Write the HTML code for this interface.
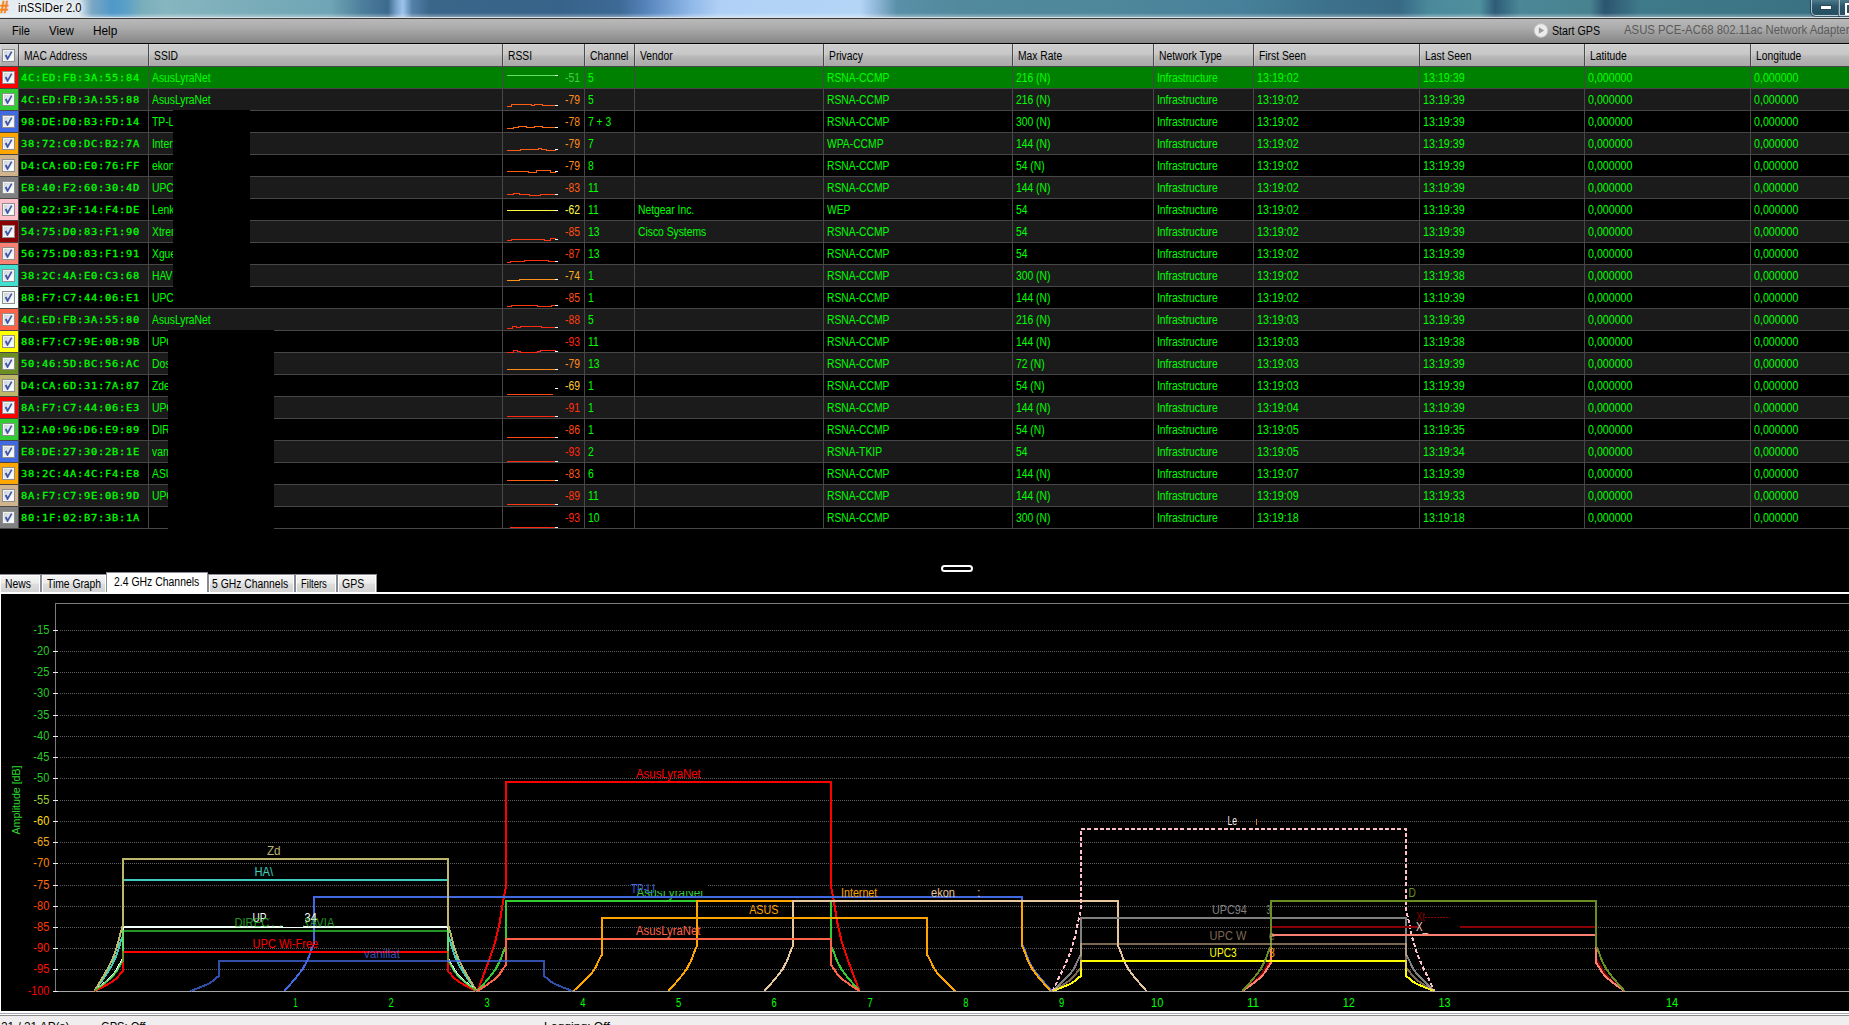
<!DOCTYPE html>
<html lang="en"><head><meta charset="utf-8"><title>inSSIDer 2.0</title>
<style>
html,body{margin:0;padding:0;background:#000}
body{width:1849px;height:1025px;position:relative;overflow:hidden;font-family:"Liberation Sans",sans-serif}
.a{position:absolute}
.t{position:absolute;white-space:pre;font-size:12.5px;line-height:21px;height:21px;transform:scaleX(.825);transform-origin:0 0;color:#0f0}
.h{color:#000}
.m{position:absolute;white-space:pre;-webkit-text-stroke:.26px #0f0;font:normal 9.3px/21px "DejaVu Sans Mono","Liberation Mono",monospace;letter-spacing:.65px;color:#0f0;height:21px;transform:scaleX(1.12);transform-origin:0 0}
.r{position:absolute;left:0;width:1849px;height:21px}
.r.o{background:#1b1b1b}
.r.s{background:#008000}
.vl{position:absolute;width:1px;background:#474747;top:66px;height:463px}
.hl{position:absolute;left:0;width:1849px;height:1px;background:#474747}
.sw{position:absolute;left:0;width:18px;height:21px}
.cb{position:absolute;left:2px;width:11px;height:11px;border:1px solid #8e8f8f;background:linear-gradient(135deg,#c6ccd5 0%,#e4e8ec 45%,#fff 85%);box-shadow:inset 0 0 0 1px #f4f4f4}
.cb svg{position:absolute;left:0;top:0}
.g{font-family:"Liberation Sans",sans-serif;font-size:12px;white-space:pre;position:absolute;transform-origin:0 0}
.tab{position:absolute;top:574px;height:17px;border:1px solid #898c95;border-bottom:none;background:linear-gradient(#f4f4f4 0%,#ececec 48%,#dedede 52%,#d2d2d2 100%);box-shadow:inset 1px 1px 0 rgba(255,255,255,.9),inset -1px 0 0 rgba(255,255,255,.9)}
.hc{position:absolute;top:44px;height:22px;background:linear-gradient(#cecece 0%,#c8c8c8 45%,#b6b6b6 60%,#a9a9a9 100%);box-shadow:inset 1px 1px 0 rgba(255,255,255,.16)}
</style></head>
<body>
<div class="a" style="left:0;top:0;width:1849px;height:17px;background:linear-gradient(90deg,#e6eef2 0px,#d9e5eb 78px,#7aa8c4 92px,#4f98c8 112px,#5aa0c8 126px,#7aaebb 142px,#86b6c0 165px,#7aadb9 250px,#6fa5b5 330px,#4d7f9c 362px,#3c6a8e 388px,#7fa8d0 397px,#9cc4ec 403px,#5580a8 412px,#3a668a 430px,#37638a 560px,#3d6a96 620px,#5a88c0 650px,#8fb8e8 690px,#b0d0f5 720px,#b5d5f7 860px,#86b0cf 880px,#5a90a8 897px,#52899c 960px,#4f889b 1100px,#47809a 1240px,#3d718b 1330px,#386a86 1400px,#4b8a9b 1430px,#4f8f9e 1480px,#2f5c78 1495px,#4a8797 1520px,#48828f 1590px,#2c5570 1605px,#3f7a8a 1640px,#3d7686 1740px,#386e80 1849px)"></div>
<div class="a" style="left:0;top:13px;width:1849px;height:4px;background:linear-gradient(rgba(255,255,255,0),rgba(255,255,255,.35))"></div>
<div class="a" style="left:0px;top:-1px;font:bold 16px/18px 'Liberation Sans',sans-serif;color:#f58220;-webkit-text-stroke:.7px #f58220;transform:scaleX(.95);transform-origin:0 0">#</div>
<div class="g" style="left:18px;top:0;line-height:16px;color:#000;transform:scaleX(.935);text-shadow:0 0 6px #fff,0 0 6px #fff,0 0 9px #fff">inSSIDer 2.0</div>
<div class="a" style="left:1811px;top:-4px;width:26px;height:18px;border:1px solid rgba(225,238,245,.7);border-radius:0 0 0 5px;background:linear-gradient(rgba(120,160,178,.55),rgba(35,72,92,.6) 50%,rgba(28,62,82,.7));box-shadow:0 0 0 1px rgba(20,40,60,.55)"></div>
<div class="a" style="left:1821px;top:6px;width:10px;height:3px;background:#fff;box-shadow:0 0 0 1px rgba(40,60,75,.55)"></div>
<div class="a" style="left:1839px;top:-4px;width:27px;height:18px;border:1px solid rgba(225,238,245,.7);background:linear-gradient(rgba(120,160,178,.55),rgba(35,72,92,.6) 50%,rgba(28,62,82,.7));box-shadow:0 0 0 1px rgba(20,40,60,.55)"></div>
<div class="a" style="left:1845px;top:3px;width:6px;height:8px;border:2px solid #fff"></div>
<div class="a" style="left:0;top:17px;width:1849px;height:1px;background:#d9e3e8"></div>
<div class="a" style="left:0;top:18px;width:1849px;height:1px;background:#3a3a3a"></div>
<div class="a" style="left:0;top:19px;width:1849px;height:24px;background:linear-gradient(#b9b9b9 0%,#acacac 35%,#989898 70%,#868686 100%)"></div>
<div class="g" style="left:12px;top:23px;line-height:16px;color:#000;transform:scaleX(0.92)">File</div>
<div class="g" style="left:49px;top:23px;line-height:16px;color:#000;transform:scaleX(0.96)">View</div>
<div class="g" style="left:93px;top:23px;line-height:16px;color:#000;transform:scaleX(0.985)">Help</div>
<svg class="a" style="left:1533px;top:23px" width="16" height="16" viewBox="0 0 16 16"><circle cx="8" cy="7.5" r="6.8" fill="#ececec" stroke="#c4c4c4" stroke-width="1"/><path d="M5.8 4.2 L11.2 7.5 L5.8 10.8 Z" fill="#9a9a9a"/></svg>
<div class="g" style="left:1552px;top:23px;line-height:16px;color:#000;transform:scaleX(.89)">Start GPS</div>
<div class="g" style="left:1624px;top:22px;line-height:16px;color:#5a5a5a;transform:scaleX(.945)">ASUS PCE-AC68 802.11ac Network Adapter</div>
<div class="a" style="left:0;top:43px;width:1849px;height:1px;background:#000"></div>
<div class="a" style="left:0;top:44px;width:1849px;height:22px;background:#a8a8a8"></div>
<div class="hc" style="left:0px;width:18px"></div>
<div class="hc" style="left:19px;width:129px"></div>
<div class="a" style="left:18px;top:44px;width:1px;height:22px;background:#4a4a4a"></div>
<div class="t h" style="left:23.5px;top:46px">MAC Address</div>
<div class="hc" style="left:149px;width:353px"></div>
<div class="a" style="left:148px;top:44px;width:1px;height:22px;background:#4a4a4a"></div>
<div class="t h" style="left:153.5px;top:46px">SSID</div>
<div class="hc" style="left:503px;width:81px"></div>
<div class="a" style="left:502px;top:44px;width:1px;height:22px;background:#4a4a4a"></div>
<div class="t h" style="left:507.5px;top:46px">RSSI</div>
<div class="hc" style="left:585px;width:49px"></div>
<div class="a" style="left:584px;top:44px;width:1px;height:22px;background:#4a4a4a"></div>
<div class="t h" style="left:589.5px;top:46px">Channel</div>
<div class="hc" style="left:635px;width:188px"></div>
<div class="a" style="left:634px;top:44px;width:1px;height:22px;background:#4a4a4a"></div>
<div class="t h" style="left:639.5px;top:46px">Vendor</div>
<div class="hc" style="left:824px;width:188px"></div>
<div class="a" style="left:823px;top:44px;width:1px;height:22px;background:#4a4a4a"></div>
<div class="t h" style="left:828.5px;top:46px">Privacy</div>
<div class="hc" style="left:1013px;width:140px"></div>
<div class="a" style="left:1012px;top:44px;width:1px;height:22px;background:#4a4a4a"></div>
<div class="t h" style="left:1017.5px;top:46px">Max Rate</div>
<div class="hc" style="left:1154px;width:99px"></div>
<div class="a" style="left:1153px;top:44px;width:1px;height:22px;background:#4a4a4a"></div>
<div class="t h" style="left:1158.5px;top:46px">Network Type</div>
<div class="hc" style="left:1254px;width:165px"></div>
<div class="a" style="left:1253px;top:44px;width:1px;height:22px;background:#4a4a4a"></div>
<div class="t h" style="left:1258.5px;top:46px">First Seen</div>
<div class="hc" style="left:1420px;width:164px"></div>
<div class="a" style="left:1419px;top:44px;width:1px;height:22px;background:#4a4a4a"></div>
<div class="t h" style="left:1424.5px;top:46px">Last Seen</div>
<div class="hc" style="left:1585px;width:165px"></div>
<div class="a" style="left:1584px;top:44px;width:1px;height:22px;background:#4a4a4a"></div>
<div class="t h" style="left:1589.5px;top:46px">Latitude</div>
<div class="hc" style="left:1751px;width:158px"></div>
<div class="a" style="left:1750px;top:44px;width:1px;height:22px;background:#4a4a4a"></div>
<div class="t h" style="left:1755.5px;top:46px">Longitude</div>
<div class="cb" style="top:49px"><svg width="11" height="11" viewBox="0 0 11 11"><path d="M1.8 5.6 L3.6 4.6 L4.7 6.9 L8.0 1.2 L9.4 1.9 L4.9 9.9 L4.1 9.9 Z" fill="#3f55a5"/></svg></div>
<div class="r s" style="top:67px"></div>
<div class="sw" style="top:67px;background:#ff0000"></div>
<div class="cb" style="top:71px"><svg width="11" height="11" viewBox="0 0 11 11"><path d="M1.8 5.6 L3.6 4.6 L4.7 6.9 L8.0 1.2 L9.4 1.9 L4.9 9.9 L4.1 9.9 Z" fill="#3f55a5"/></svg></div>
<div class="m" style="left:21.1px;top:67px">4C:ED:FB:3A:55:84</div>
<div class="t" style="left:151.6px;top:68px">AsusLyraNet</div>
<div class="t" style="left:540px;width:48.5px;text-align:right;top:68px;color:#40d040">-51</div>
<div class="t" style="left:587.6px;top:68px">5</div>
<div class="t" style="left:826.6px;top:68px">RSNA-CCMP</div>
<div class="t" style="left:1015.6px;top:68px">216 (N)</div>
<div class="t" style="left:1156.6px;top:68px">Infrastructure</div>
<div class="t" style="left:1256.6px;top:68px;transform:scaleX(.858)">13:19:02</div>
<div class="t" style="left:1422.6px;top:68px;transform:scaleX(.858)">13:19:39</div>
<div class="t" style="left:1587.6px;top:68px;transform:scaleX(.853)">0,000000</div>
<div class="t" style="left:1753.6px;top:68px;transform:scaleX(.853)">0,000000</div>
<div class="r o" style="top:89px"></div>
<div class="sw" style="top:89px;background:#32cd32"></div>
<div class="cb" style="top:93px"><svg width="11" height="11" viewBox="0 0 11 11"><path d="M1.8 5.6 L3.6 4.6 L4.7 6.9 L8.0 1.2 L9.4 1.9 L4.9 9.9 L4.1 9.9 Z" fill="#3f55a5"/></svg></div>
<div class="m" style="left:21.1px;top:89px">4C:ED:FB:3A:55:88</div>
<div class="t" style="left:151.6px;top:90px">AsusLyraNet</div>
<div class="t" style="left:540px;width:48.5px;text-align:right;top:90px;color:#ff8c1a">-79</div>
<div class="t" style="left:587.6px;top:90px">5</div>
<div class="t" style="left:826.6px;top:90px">RSNA-CCMP</div>
<div class="t" style="left:1015.6px;top:90px">216 (N)</div>
<div class="t" style="left:1156.6px;top:90px">Infrastructure</div>
<div class="t" style="left:1256.6px;top:90px;transform:scaleX(.858)">13:19:02</div>
<div class="t" style="left:1422.6px;top:90px;transform:scaleX(.858)">13:19:39</div>
<div class="t" style="left:1587.6px;top:90px;transform:scaleX(.853)">0,000000</div>
<div class="t" style="left:1753.6px;top:90px;transform:scaleX(.853)">0,000000</div>
<div class="r" style="top:111px"></div>
<div class="sw" style="top:111px;background:#4169e1"></div>
<div class="cb" style="top:115px"><svg width="11" height="11" viewBox="0 0 11 11"><path d="M1.8 5.6 L3.6 4.6 L4.7 6.9 L8.0 1.2 L9.4 1.9 L4.9 9.9 L4.1 9.9 Z" fill="#3f55a5"/></svg></div>
<div class="m" style="left:21.1px;top:111px">98:DE:D0:B3:FD:14</div>
<div class="t" style="left:151.6px;top:112px">TP-LI</div>
<div class="t" style="left:540px;width:48.5px;text-align:right;top:112px;color:#ff921b">-78</div>
<div class="t" style="left:587.6px;top:112px">7 + 3</div>
<div class="t" style="left:826.6px;top:112px">RSNA-CCMP</div>
<div class="t" style="left:1015.6px;top:112px">300 (N)</div>
<div class="t" style="left:1156.6px;top:112px">Infrastructure</div>
<div class="t" style="left:1256.6px;top:112px;transform:scaleX(.858)">13:19:02</div>
<div class="t" style="left:1422.6px;top:112px;transform:scaleX(.858)">13:19:39</div>
<div class="t" style="left:1587.6px;top:112px;transform:scaleX(.853)">0,000000</div>
<div class="t" style="left:1753.6px;top:112px;transform:scaleX(.853)">0,000000</div>
<div class="r o" style="top:133px"></div>
<div class="sw" style="top:133px;background:#ffa500"></div>
<div class="cb" style="top:137px"><svg width="11" height="11" viewBox="0 0 11 11"><path d="M1.8 5.6 L3.6 4.6 L4.7 6.9 L8.0 1.2 L9.4 1.9 L4.9 9.9 L4.1 9.9 Z" fill="#3f55a5"/></svg></div>
<div class="m" style="left:21.1px;top:133px">38:72:C0:DC:B2:7A</div>
<div class="t" style="left:151.6px;top:134px">Intern</div>
<div class="t" style="left:540px;width:48.5px;text-align:right;top:134px;color:#ff8c1a">-79</div>
<div class="t" style="left:587.6px;top:134px">7</div>
<div class="t" style="left:826.6px;top:134px">WPA-CCMP</div>
<div class="t" style="left:1015.6px;top:134px">144 (N)</div>
<div class="t" style="left:1156.6px;top:134px">Infrastructure</div>
<div class="t" style="left:1256.6px;top:134px;transform:scaleX(.858)">13:19:02</div>
<div class="t" style="left:1422.6px;top:134px;transform:scaleX(.858)">13:19:39</div>
<div class="t" style="left:1587.6px;top:134px;transform:scaleX(.853)">0,000000</div>
<div class="t" style="left:1753.6px;top:134px;transform:scaleX(.853)">0,000000</div>
<div class="r" style="top:155px"></div>
<div class="sw" style="top:155px;background:#d2b48c"></div>
<div class="cb" style="top:159px"><svg width="11" height="11" viewBox="0 0 11 11"><path d="M1.8 5.6 L3.6 4.6 L4.7 6.9 L8.0 1.2 L9.4 1.9 L4.9 9.9 L4.1 9.9 Z" fill="#3f55a5"/></svg></div>
<div class="m" style="left:21.1px;top:155px">D4:CA:6D:E0:76:FF</div>
<div class="t" style="left:151.6px;top:156px">ekon</div>
<div class="t" style="left:540px;width:48.5px;text-align:right;top:156px;color:#ff8c1a">-79</div>
<div class="t" style="left:587.6px;top:156px">8</div>
<div class="t" style="left:826.6px;top:156px">RSNA-CCMP</div>
<div class="t" style="left:1015.6px;top:156px">54 (N)</div>
<div class="t" style="left:1156.6px;top:156px">Infrastructure</div>
<div class="t" style="left:1256.6px;top:156px;transform:scaleX(.858)">13:19:02</div>
<div class="t" style="left:1422.6px;top:156px;transform:scaleX(.858)">13:19:39</div>
<div class="t" style="left:1587.6px;top:156px;transform:scaleX(.853)">0,000000</div>
<div class="t" style="left:1753.6px;top:156px;transform:scaleX(.853)">0,000000</div>
<div class="r o" style="top:177px"></div>
<div class="sw" style="top:177px;background:#808080"></div>
<div class="cb" style="top:181px"><svg width="11" height="11" viewBox="0 0 11 11"><path d="M1.8 5.6 L3.6 4.6 L4.7 6.9 L8.0 1.2 L9.4 1.9 L4.9 9.9 L4.1 9.9 Z" fill="#3f55a5"/></svg></div>
<div class="m" style="left:21.1px;top:177px">E8:40:F2:60:30:4D</div>
<div class="t" style="left:151.6px;top:178px">UPC</div>
<div class="t" style="left:540px;width:48.5px;text-align:right;top:178px;color:#ff5c14">-83</div>
<div class="t" style="left:587.6px;top:178px">11</div>
<div class="t" style="left:826.6px;top:178px">RSNA-CCMP</div>
<div class="t" style="left:1015.6px;top:178px">144 (N)</div>
<div class="t" style="left:1156.6px;top:178px">Infrastructure</div>
<div class="t" style="left:1256.6px;top:178px;transform:scaleX(.858)">13:19:02</div>
<div class="t" style="left:1422.6px;top:178px;transform:scaleX(.858)">13:19:39</div>
<div class="t" style="left:1587.6px;top:178px;transform:scaleX(.853)">0,000000</div>
<div class="t" style="left:1753.6px;top:178px;transform:scaleX(.853)">0,000000</div>
<div class="r" style="top:199px"></div>
<div class="sw" style="top:199px;background:#ffc0cb"></div>
<div class="cb" style="top:203px"><svg width="11" height="11" viewBox="0 0 11 11"><path d="M1.8 5.6 L3.6 4.6 L4.7 6.9 L8.0 1.2 L9.4 1.9 L4.9 9.9 L4.1 9.9 Z" fill="#3f55a5"/></svg></div>
<div class="m" style="left:21.1px;top:199px">00:22:3F:14:F4:DE</div>
<div class="t" style="left:151.6px;top:200px">Lenk</div>
<div class="t" style="left:540px;width:48.5px;text-align:right;top:200px;color:#ffff40">-62</div>
<div class="t" style="left:587.6px;top:200px">11</div>
<div class="t" style="left:637.6px;top:200px">Netgear Inc.</div>
<div class="t" style="left:826.6px;top:200px">WEP</div>
<div class="t" style="left:1015.6px;top:200px">54</div>
<div class="t" style="left:1156.6px;top:200px">Infrastructure</div>
<div class="t" style="left:1256.6px;top:200px;transform:scaleX(.858)">13:19:02</div>
<div class="t" style="left:1422.6px;top:200px;transform:scaleX(.858)">13:19:39</div>
<div class="t" style="left:1587.6px;top:200px;transform:scaleX(.853)">0,000000</div>
<div class="t" style="left:1753.6px;top:200px;transform:scaleX(.853)">0,000000</div>
<div class="r o" style="top:221px"></div>
<div class="sw" style="top:221px;background:#8b0000"></div>
<div class="cb" style="top:225px"><svg width="11" height="11" viewBox="0 0 11 11"><path d="M1.8 5.6 L3.6 4.6 L4.7 6.9 L8.0 1.2 L9.4 1.9 L4.9 9.9 L4.1 9.9 Z" fill="#3f55a5"/></svg></div>
<div class="m" style="left:21.1px;top:221px">54:75:D0:83:F1:90</div>
<div class="t" style="left:151.6px;top:222px">Xtrem</div>
<div class="t" style="left:540px;width:48.5px;text-align:right;top:222px;color:#ff4f12">-85</div>
<div class="t" style="left:587.6px;top:222px">13</div>
<div class="t" style="left:637.6px;top:222px">Cisco Systems</div>
<div class="t" style="left:826.6px;top:222px">RSNA-CCMP</div>
<div class="t" style="left:1015.6px;top:222px">54</div>
<div class="t" style="left:1156.6px;top:222px">Infrastructure</div>
<div class="t" style="left:1256.6px;top:222px;transform:scaleX(.858)">13:19:02</div>
<div class="t" style="left:1422.6px;top:222px;transform:scaleX(.858)">13:19:39</div>
<div class="t" style="left:1587.6px;top:222px;transform:scaleX(.853)">0,000000</div>
<div class="t" style="left:1753.6px;top:222px;transform:scaleX(.853)">0,000000</div>
<div class="r" style="top:243px"></div>
<div class="sw" style="top:243px;background:#fa8072"></div>
<div class="cb" style="top:247px"><svg width="11" height="11" viewBox="0 0 11 11"><path d="M1.8 5.6 L3.6 4.6 L4.7 6.9 L8.0 1.2 L9.4 1.9 L4.9 9.9 L4.1 9.9 Z" fill="#3f55a5"/></svg></div>
<div class="m" style="left:21.1px;top:243px">56:75:D0:83:F1:91</div>
<div class="t" style="left:151.6px;top:244px">Xgue</div>
<div class="t" style="left:540px;width:48.5px;text-align:right;top:244px;color:#ff4210">-87</div>
<div class="t" style="left:587.6px;top:244px">13</div>
<div class="t" style="left:826.6px;top:244px">RSNA-CCMP</div>
<div class="t" style="left:1015.6px;top:244px">54</div>
<div class="t" style="left:1156.6px;top:244px">Infrastructure</div>
<div class="t" style="left:1256.6px;top:244px;transform:scaleX(.858)">13:19:02</div>
<div class="t" style="left:1422.6px;top:244px;transform:scaleX(.858)">13:19:39</div>
<div class="t" style="left:1587.6px;top:244px;transform:scaleX(.853)">0,000000</div>
<div class="t" style="left:1753.6px;top:244px;transform:scaleX(.853)">0,000000</div>
<div class="r o" style="top:265px"></div>
<div class="sw" style="top:265px;background:#40e0d0"></div>
<div class="cb" style="top:269px"><svg width="11" height="11" viewBox="0 0 11 11"><path d="M1.8 5.6 L3.6 4.6 L4.7 6.9 L8.0 1.2 L9.4 1.9 L4.9 9.9 L4.1 9.9 Z" fill="#3f55a5"/></svg></div>
<div class="m" style="left:21.1px;top:265px">38:2C:4A:E0:C3:68</div>
<div class="t" style="left:151.6px;top:266px">HAV</div>
<div class="t" style="left:540px;width:48.5px;text-align:right;top:266px;color:#ffaa20">-74</div>
<div class="t" style="left:587.6px;top:266px">1</div>
<div class="t" style="left:826.6px;top:266px">RSNA-CCMP</div>
<div class="t" style="left:1015.6px;top:266px">300 (N)</div>
<div class="t" style="left:1156.6px;top:266px">Infrastructure</div>
<div class="t" style="left:1256.6px;top:266px;transform:scaleX(.858)">13:19:02</div>
<div class="t" style="left:1422.6px;top:266px;transform:scaleX(.858)">13:19:38</div>
<div class="t" style="left:1587.6px;top:266px;transform:scaleX(.853)">0,000000</div>
<div class="t" style="left:1753.6px;top:266px;transform:scaleX(.853)">0,000000</div>
<div class="r" style="top:287px"></div>
<div class="sw" style="top:287px;background:#f5fffa"></div>
<div class="cb" style="top:291px"><svg width="11" height="11" viewBox="0 0 11 11"><path d="M1.8 5.6 L3.6 4.6 L4.7 6.9 L8.0 1.2 L9.4 1.9 L4.9 9.9 L4.1 9.9 Z" fill="#3f55a5"/></svg></div>
<div class="m" style="left:21.1px;top:287px">88:F7:C7:44:06:E1</div>
<div class="t" style="left:151.6px;top:288px">UPC</div>
<div class="t" style="left:540px;width:48.5px;text-align:right;top:288px;color:#ff4f12">-85</div>
<div class="t" style="left:587.6px;top:288px">1</div>
<div class="t" style="left:826.6px;top:288px">RSNA-CCMP</div>
<div class="t" style="left:1015.6px;top:288px">144 (N)</div>
<div class="t" style="left:1156.6px;top:288px">Infrastructure</div>
<div class="t" style="left:1256.6px;top:288px;transform:scaleX(.858)">13:19:02</div>
<div class="t" style="left:1422.6px;top:288px;transform:scaleX(.858)">13:19:39</div>
<div class="t" style="left:1587.6px;top:288px;transform:scaleX(.853)">0,000000</div>
<div class="t" style="left:1753.6px;top:288px;transform:scaleX(.853)">0,000000</div>
<div class="r o" style="top:309px"></div>
<div class="sw" style="top:309px;background:#ff6347"></div>
<div class="cb" style="top:313px"><svg width="11" height="11" viewBox="0 0 11 11"><path d="M1.8 5.6 L3.6 4.6 L4.7 6.9 L8.0 1.2 L9.4 1.9 L4.9 9.9 L4.1 9.9 Z" fill="#3f55a5"/></svg></div>
<div class="m" style="left:21.1px;top:309px">4C:ED:FB:3A:55:80</div>
<div class="t" style="left:151.6px;top:310px">AsusLyraNet</div>
<div class="t" style="left:540px;width:48.5px;text-align:right;top:310px;color:#ff3e10">-88</div>
<div class="t" style="left:587.6px;top:310px">5</div>
<div class="t" style="left:826.6px;top:310px">RSNA-CCMP</div>
<div class="t" style="left:1015.6px;top:310px">216 (N)</div>
<div class="t" style="left:1156.6px;top:310px">Infrastructure</div>
<div class="t" style="left:1256.6px;top:310px;transform:scaleX(.858)">13:19:03</div>
<div class="t" style="left:1422.6px;top:310px;transform:scaleX(.858)">13:19:39</div>
<div class="t" style="left:1587.6px;top:310px;transform:scaleX(.853)">0,000000</div>
<div class="t" style="left:1753.6px;top:310px;transform:scaleX(.853)">0,000000</div>
<div class="r" style="top:331px"></div>
<div class="sw" style="top:331px;background:#ffff00"></div>
<div class="cb" style="top:335px"><svg width="11" height="11" viewBox="0 0 11 11"><path d="M1.8 5.6 L3.6 4.6 L4.7 6.9 L8.0 1.2 L9.4 1.9 L4.9 9.9 L4.1 9.9 Z" fill="#3f55a5"/></svg></div>
<div class="m" style="left:21.1px;top:331px">88:F7:C7:9E:0B:9B</div>
<div class="t" style="left:151.6px;top:332px">UPC</div>
<div class="t" style="left:540px;width:48.5px;text-align:right;top:332px;color:#ff2810">-93</div>
<div class="t" style="left:587.6px;top:332px">11</div>
<div class="t" style="left:826.6px;top:332px">RSNA-CCMP</div>
<div class="t" style="left:1015.6px;top:332px">144 (N)</div>
<div class="t" style="left:1156.6px;top:332px">Infrastructure</div>
<div class="t" style="left:1256.6px;top:332px;transform:scaleX(.858)">13:19:03</div>
<div class="t" style="left:1422.6px;top:332px;transform:scaleX(.858)">13:19:38</div>
<div class="t" style="left:1587.6px;top:332px;transform:scaleX(.853)">0,000000</div>
<div class="t" style="left:1753.6px;top:332px;transform:scaleX(.853)">0,000000</div>
<div class="r o" style="top:353px"></div>
<div class="sw" style="top:353px;background:#6b8e23"></div>
<div class="cb" style="top:357px"><svg width="11" height="11" viewBox="0 0 11 11"><path d="M1.8 5.6 L3.6 4.6 L4.7 6.9 L8.0 1.2 L9.4 1.9 L4.9 9.9 L4.1 9.9 Z" fill="#3f55a5"/></svg></div>
<div class="m" style="left:21.1px;top:353px">50:46:5D:BC:56:AC</div>
<div class="t" style="left:151.6px;top:354px">Dos</div>
<div class="t" style="left:540px;width:48.5px;text-align:right;top:354px;color:#ff8c1a">-79</div>
<div class="t" style="left:587.6px;top:354px">13</div>
<div class="t" style="left:826.6px;top:354px">RSNA-CCMP</div>
<div class="t" style="left:1015.6px;top:354px">72 (N)</div>
<div class="t" style="left:1156.6px;top:354px">Infrastructure</div>
<div class="t" style="left:1256.6px;top:354px;transform:scaleX(.858)">13:19:03</div>
<div class="t" style="left:1422.6px;top:354px;transform:scaleX(.858)">13:19:39</div>
<div class="t" style="left:1587.6px;top:354px;transform:scaleX(.853)">0,000000</div>
<div class="t" style="left:1753.6px;top:354px;transform:scaleX(.853)">0,000000</div>
<div class="r" style="top:375px"></div>
<div class="sw" style="top:375px;background:#bdb76b"></div>
<div class="cb" style="top:379px"><svg width="11" height="11" viewBox="0 0 11 11"><path d="M1.8 5.6 L3.6 4.6 L4.7 6.9 L8.0 1.2 L9.4 1.9 L4.9 9.9 L4.1 9.9 Z" fill="#3f55a5"/></svg></div>
<div class="m" style="left:21.1px;top:375px">D4:CA:6D:31:7A:87</div>
<div class="t" style="left:151.6px;top:376px">Zde</div>
<div class="t" style="left:540px;width:48.5px;text-align:right;top:376px;color:#ffcd32">-69</div>
<div class="t" style="left:587.6px;top:376px">1</div>
<div class="t" style="left:826.6px;top:376px">RSNA-CCMP</div>
<div class="t" style="left:1015.6px;top:376px">54 (N)</div>
<div class="t" style="left:1156.6px;top:376px">Infrastructure</div>
<div class="t" style="left:1256.6px;top:376px;transform:scaleX(.858)">13:19:03</div>
<div class="t" style="left:1422.6px;top:376px;transform:scaleX(.858)">13:19:39</div>
<div class="t" style="left:1587.6px;top:376px;transform:scaleX(.853)">0,000000</div>
<div class="t" style="left:1753.6px;top:376px;transform:scaleX(.853)">0,000000</div>
<div class="r o" style="top:397px"></div>
<div class="sw" style="top:397px;background:#ff0000"></div>
<div class="cb" style="top:401px"><svg width="11" height="11" viewBox="0 0 11 11"><path d="M1.8 5.6 L3.6 4.6 L4.7 6.9 L8.0 1.2 L9.4 1.9 L4.9 9.9 L4.1 9.9 Z" fill="#3f55a5"/></svg></div>
<div class="m" style="left:21.1px;top:397px">8A:F7:C7:44:06:E3</div>
<div class="t" style="left:151.6px;top:398px">UPC</div>
<div class="t" style="left:540px;width:48.5px;text-align:right;top:398px;color:#ff3110">-91</div>
<div class="t" style="left:587.6px;top:398px">1</div>
<div class="t" style="left:826.6px;top:398px">RSNA-CCMP</div>
<div class="t" style="left:1015.6px;top:398px">144 (N)</div>
<div class="t" style="left:1156.6px;top:398px">Infrastructure</div>
<div class="t" style="left:1256.6px;top:398px;transform:scaleX(.858)">13:19:04</div>
<div class="t" style="left:1422.6px;top:398px;transform:scaleX(.858)">13:19:39</div>
<div class="t" style="left:1587.6px;top:398px;transform:scaleX(.853)">0,000000</div>
<div class="t" style="left:1753.6px;top:398px;transform:scaleX(.853)">0,000000</div>
<div class="r" style="top:419px"></div>
<div class="sw" style="top:419px;background:#32cd32"></div>
<div class="cb" style="top:423px"><svg width="11" height="11" viewBox="0 0 11 11"><path d="M1.8 5.6 L3.6 4.6 L4.7 6.9 L8.0 1.2 L9.4 1.9 L4.9 9.9 L4.1 9.9 Z" fill="#3f55a5"/></svg></div>
<div class="m" style="left:21.1px;top:419px">12:A0:96:D6:E9:89</div>
<div class="t" style="left:151.6px;top:420px">DIR</div>
<div class="t" style="left:540px;width:48.5px;text-align:right;top:420px;color:#ff4811">-86</div>
<div class="t" style="left:587.6px;top:420px">1</div>
<div class="t" style="left:826.6px;top:420px">RSNA-CCMP</div>
<div class="t" style="left:1015.6px;top:420px">54 (N)</div>
<div class="t" style="left:1156.6px;top:420px">Infrastructure</div>
<div class="t" style="left:1256.6px;top:420px;transform:scaleX(.858)">13:19:05</div>
<div class="t" style="left:1422.6px;top:420px;transform:scaleX(.858)">13:19:35</div>
<div class="t" style="left:1587.6px;top:420px;transform:scaleX(.853)">0,000000</div>
<div class="t" style="left:1753.6px;top:420px;transform:scaleX(.853)">0,000000</div>
<div class="r o" style="top:441px"></div>
<div class="sw" style="top:441px;background:#4169e1"></div>
<div class="cb" style="top:445px"><svg width="11" height="11" viewBox="0 0 11 11"><path d="M1.8 5.6 L3.6 4.6 L4.7 6.9 L8.0 1.2 L9.4 1.9 L4.9 9.9 L4.1 9.9 Z" fill="#3f55a5"/></svg></div>
<div class="m" style="left:21.1px;top:441px">E8:DE:27:30:2B:1E</div>
<div class="t" style="left:151.6px;top:442px">vani</div>
<div class="t" style="left:540px;width:48.5px;text-align:right;top:442px;color:#ff2810">-93</div>
<div class="t" style="left:587.6px;top:442px">2</div>
<div class="t" style="left:826.6px;top:442px">RSNA-TKIP</div>
<div class="t" style="left:1015.6px;top:442px">54</div>
<div class="t" style="left:1156.6px;top:442px">Infrastructure</div>
<div class="t" style="left:1256.6px;top:442px;transform:scaleX(.858)">13:19:05</div>
<div class="t" style="left:1422.6px;top:442px;transform:scaleX(.858)">13:19:34</div>
<div class="t" style="left:1587.6px;top:442px;transform:scaleX(.853)">0,000000</div>
<div class="t" style="left:1753.6px;top:442px;transform:scaleX(.853)">0,000000</div>
<div class="r" style="top:463px"></div>
<div class="sw" style="top:463px;background:#ffa500"></div>
<div class="cb" style="top:467px"><svg width="11" height="11" viewBox="0 0 11 11"><path d="M1.8 5.6 L3.6 4.6 L4.7 6.9 L8.0 1.2 L9.4 1.9 L4.9 9.9 L4.1 9.9 Z" fill="#3f55a5"/></svg></div>
<div class="m" style="left:21.1px;top:463px">38:2C:4A:4C:F4:E8</div>
<div class="t" style="left:151.6px;top:464px">ASU</div>
<div class="t" style="left:540px;width:48.5px;text-align:right;top:464px;color:#ff5c14">-83</div>
<div class="t" style="left:587.6px;top:464px">6</div>
<div class="t" style="left:826.6px;top:464px">RSNA-CCMP</div>
<div class="t" style="left:1015.6px;top:464px">144 (N)</div>
<div class="t" style="left:1156.6px;top:464px">Infrastructure</div>
<div class="t" style="left:1256.6px;top:464px;transform:scaleX(.858)">13:19:07</div>
<div class="t" style="left:1422.6px;top:464px;transform:scaleX(.858)">13:19:39</div>
<div class="t" style="left:1587.6px;top:464px;transform:scaleX(.853)">0,000000</div>
<div class="t" style="left:1753.6px;top:464px;transform:scaleX(.853)">0,000000</div>
<div class="r o" style="top:485px"></div>
<div class="sw" style="top:485px;background:#d2b48c"></div>
<div class="cb" style="top:489px"><svg width="11" height="11" viewBox="0 0 11 11"><path d="M1.8 5.6 L3.6 4.6 L4.7 6.9 L8.0 1.2 L9.4 1.9 L4.9 9.9 L4.1 9.9 Z" fill="#3f55a5"/></svg></div>
<div class="m" style="left:21.1px;top:485px">8A:F7:C7:9E:0B:9D</div>
<div class="t" style="left:151.6px;top:486px">UPC</div>
<div class="t" style="left:540px;width:48.5px;text-align:right;top:486px;color:#ff3910">-89</div>
<div class="t" style="left:587.6px;top:486px">11</div>
<div class="t" style="left:826.6px;top:486px">RSNA-CCMP</div>
<div class="t" style="left:1015.6px;top:486px">144 (N)</div>
<div class="t" style="left:1156.6px;top:486px">Infrastructure</div>
<div class="t" style="left:1256.6px;top:486px;transform:scaleX(.858)">13:19:09</div>
<div class="t" style="left:1422.6px;top:486px;transform:scaleX(.858)">13:19:33</div>
<div class="t" style="left:1587.6px;top:486px;transform:scaleX(.853)">0,000000</div>
<div class="t" style="left:1753.6px;top:486px;transform:scaleX(.853)">0,000000</div>
<div class="r" style="top:507px"></div>
<div class="sw" style="top:507px;background:#808080"></div>
<div class="cb" style="top:511px"><svg width="11" height="11" viewBox="0 0 11 11"><path d="M1.8 5.6 L3.6 4.6 L4.7 6.9 L8.0 1.2 L9.4 1.9 L4.9 9.9 L4.1 9.9 Z" fill="#3f55a5"/></svg></div>
<div class="m" style="left:21.1px;top:507px">80:1F:02:B7:3B:1A</div>
<div class="t" style="left:540px;width:48.5px;text-align:right;top:508px;color:#ff2810">-93</div>
<div class="t" style="left:587.6px;top:508px">10</div>
<div class="t" style="left:826.6px;top:508px">RSNA-CCMP</div>
<div class="t" style="left:1015.6px;top:508px">300 (N)</div>
<div class="t" style="left:1156.6px;top:508px">Infrastructure</div>
<div class="t" style="left:1256.6px;top:508px;transform:scaleX(.858)">13:19:18</div>
<div class="t" style="left:1422.6px;top:508px;transform:scaleX(.858)">13:19:18</div>
<div class="t" style="left:1587.6px;top:508px;transform:scaleX(.853)">0,000000</div>
<div class="t" style="left:1753.6px;top:508px;transform:scaleX(.853)">0,000000</div>
<div class="hl" style="top:66px"></div>
<div class="hl" style="top:88px"></div>
<div class="hl" style="top:110px"></div>
<div class="hl" style="top:132px"></div>
<div class="hl" style="top:154px"></div>
<div class="hl" style="top:176px"></div>
<div class="hl" style="top:198px"></div>
<div class="hl" style="top:220px"></div>
<div class="hl" style="top:242px"></div>
<div class="hl" style="top:264px"></div>
<div class="hl" style="top:286px"></div>
<div class="hl" style="top:308px"></div>
<div class="hl" style="top:330px"></div>
<div class="hl" style="top:352px"></div>
<div class="hl" style="top:374px"></div>
<div class="hl" style="top:396px"></div>
<div class="hl" style="top:418px"></div>
<div class="hl" style="top:440px"></div>
<div class="hl" style="top:462px"></div>
<div class="hl" style="top:484px"></div>
<div class="hl" style="top:506px"></div>
<div class="hl" style="top:528px"></div>
<div class="vl" style="left:18px"></div>
<div class="vl" style="left:148px"></div>
<div class="vl" style="left:502px"></div>
<div class="vl" style="left:584px"></div>
<div class="vl" style="left:634px"></div>
<div class="vl" style="left:823px"></div>
<div class="vl" style="left:1012px"></div>
<div class="vl" style="left:1153px"></div>
<div class="vl" style="left:1253px"></div>
<div class="vl" style="left:1419px"></div>
<div class="vl" style="left:1584px"></div>
<div class="vl" style="left:1750px"></div>
<svg class="a" style="left:500px;top:66px" width="84" height="464" viewBox="500 66 84 464" shape-rendering="crispEdges">
<path d="M507 75.5 L555 75.5" fill="none" stroke="#5fe05f" stroke-width="1"/>
<path d="M555 75.5 L558 75.5" stroke="#fff" stroke-width="1"/>
<path d="M507 106.5 L511 106.5 L511 104.5 L514 104.5 L517 104.5 L517 104.5 L525 104.5 L525 104.5 L531 104.5 L531 105.5 L534 105.5 L534 104.5 L542 104.5 L542 105.5 L550 105.5 L555 105.5 L555 105.5" fill="none" stroke="#ff5c14" stroke-width="1"/>
<path d="M555 105.5 L558 105.5" stroke="#fff" stroke-width="1"/>
<path d="M507 128.5 L510 128.5 L513 128.5 L513 127.5 L518 127.5 L518 126.5 L526 126.5 L526 127.5 L529 127.5 L529 127.5 L534 127.5 L534 126.5 L542 126.5 L542 127.5 L548 127.5 L554 127.5 L555 127.5 L555 127.5" fill="none" stroke="#ff6816" stroke-width="1"/>
<path d="M555 127.5 L558 127.5" stroke="#fff" stroke-width="1"/>
<path d="M507 150.5 L515 150.5 L520 150.5 L520 149.5 L524 149.5 L524 149.5 L532 149.5 L532 149.5 L538 149.5 L538 148.5 L541 148.5 L541 149.5 L546 149.5 L546 150.5 L552 150.5 L555 150.5 L555 149.5" fill="none" stroke="#ff5c14" stroke-width="1"/>
<path d="M555 149.5 L558 149.5" stroke="#fff" stroke-width="1"/>
<path d="M507 171.5 L515 171.5 L515 171.5 L520 171.5 L528 171.5 L528 172.5 L531 172.5 L536 172.5 L536 170.5 L539 170.5 L544 170.5 L550 170.5 L550 172.5 L555 172.5 L555 171.5" fill="none" stroke="#ff5c14" stroke-width="1"/>
<path d="M555 171.5 L558 171.5" stroke="#fff" stroke-width="1"/>
<path d="M507 194.5 L513 194.5 L513 193.5 L519 193.5 L519 194.5 L523 194.5 L529 194.5 L529 195.5 L532 195.5 L532 195.5 L540 195.5 L540 194.5 L546 194.5 L551 194.5 L555 194.5 L555 194.5" fill="none" stroke="#ff4210" stroke-width="1"/>
<path d="M555 194.5 L558 194.5" stroke="#fff" stroke-width="1"/>
<path d="M507 210.5 L555 210.5" fill="none" stroke="#ffff40" stroke-width="1"/>
<path d="M555 210.5 L558 210.5" stroke="#fff" stroke-width="1"/>
<path d="M507 240.5 L511 240.5 L511 239.5 L515 239.5 L515 239.5 L518 239.5 L518 239.5 L523 239.5 L523 239.5 L529 239.5 L529 239.5 L533 239.5 L541 239.5 L544 239.5 L544 240.5 L550 240.5 L550 238.5 L555 238.5 L555 239.5" fill="none" stroke="#ff3910" stroke-width="1"/>
<path d="M555 239.5 L558 239.5" stroke="#fff" stroke-width="1"/>
<path d="M507 262.5 L510 262.5 L510 261.5 L516 261.5 L516 261.5 L524 261.5 L524 260.5 L532 260.5 L532 260.5 L537 260.5 L540 260.5 L548 260.5 L548 261.5 L553 261.5 L555 261.5 L555 261.5" fill="none" stroke="#ff3110" stroke-width="1"/>
<path d="M555 261.5 L558 261.5" stroke="#fff" stroke-width="1"/>
<path d="M507 280.5 L513 280.5 L513 280.5 L519 280.5 L519 279.5 L522 279.5 L522 279.5 L527 279.5 L527 279.5 L535 279.5 L535 279.5 L539 279.5 L542 279.5 L547 279.5 L550 279.5 L555 279.5 L555 279.5" fill="none" stroke="#ff921b" stroke-width="1"/>
<path d="M555 279.5 L558 279.5" stroke="#fff" stroke-width="1"/>
<path d="M507 306.5 L511 306.5 L511 305.5 L519 305.5 L519 305.5 L523 305.5 L527 305.5 L533 305.5 L537 305.5 L537 306.5 L542 306.5 L545 306.5 L551 306.5 L551 305.5 L555 305.5 L555 305.5" fill="none" stroke="#ff3910" stroke-width="1"/>
<path d="M555 305.5 L558 305.5" stroke="#fff" stroke-width="1"/>
<path d="M507 328.5 L512 328.5 L512 326.5 L516 326.5 L516 327.5 L520 327.5 L520 326.5 L526 326.5 L531 326.5 L534 326.5 L537 326.5 L541 326.5 L541 327.5 L547 327.5 L552 327.5 L555 327.5 L555 327.5" fill="none" stroke="#ff2c10" stroke-width="1"/>
<path d="M555 327.5 L558 327.5" stroke="#fff" stroke-width="1"/>
<path d="M507 352.5 L513 352.5 L513 350.5 L517 350.5 L517 351.5 L520 351.5 L520 352.5 L524 352.5 L532 352.5 L537 352.5 L537 351.5 L540 351.5 L540 350.5 L548 350.5 L552 350.5 L555 350.5 L555 351.5" fill="none" stroke="#ff2810" stroke-width="1"/>
<path d="M555 351.5 L558 351.5" stroke="#fff" stroke-width="1"/>
<path d="M507 369.5 L555 369.5" fill="none" stroke="#ff8c1a" stroke-width="1"/>
<path d="M555 369.5 L558 369.5" stroke="#fff" stroke-width="1"/>
<path d="M507 394.5 L553 394.5" fill="none" stroke="#ff4512" stroke-width="1"/>
<path d="M555 388.5 L558 388.5" stroke="#fff" stroke-width="1"/>
<path d="M507 416.5 L511 416.5 L511 416.5 L516 416.5 L516 416.5 L521 416.5 L521 416.5 L524 416.5 L529 416.5 L537 416.5 L545 416.5 L545 416.5 L553 416.5 L555 416.5 L555 416.5" fill="none" stroke="#ff2810" stroke-width="1"/>
<path d="M555 416.5 L558 416.5" stroke="#fff" stroke-width="1"/>
<path d="M507 437.5 L555 437.5" fill="none" stroke="#ff4811" stroke-width="1"/>
<path d="M555 437.5 L558 437.5" stroke="#fff" stroke-width="1"/>
<path d="M507 461.5 L555 461.5" fill="none" stroke="#ff2810" stroke-width="1"/>
<path d="M555 461.5 L558 461.5" stroke="#fff" stroke-width="1"/>
<path d="M507 480.5 L555 480.5" fill="none" stroke="#ff5c14" stroke-width="1"/>
<path d="M555 480.5 L558 480.5" stroke="#fff" stroke-width="1"/>
<path d="M507 504.5 L555 504.5" fill="none" stroke="#ff3910" stroke-width="1"/>
<path d="M555 504.5 L558 504.5" stroke="#fff" stroke-width="1"/>
<path d="M510 527.5 L555 527.5" fill="none" stroke="#ff2810" stroke-width="1"/>
<path d="M555 527.5 L558 527.5" stroke="#fff" stroke-width="1"/>
</svg>
<div class="a" style="left:173px;top:110px;width:77px;height:198px;background:#000"></div>
<div class="a" style="left:168px;top:330px;width:106px;height:200px;background:#000"></div>
<div class="a" style="left:941px;top:565px;width:28px;height:3px;border:2px solid #fff;border-radius:4px;background:#000"></div>
<div class="tab" style="left:-1px;width:40px"></div>
<div class="t h" style="left:5.0px;top:574px;transform:scaleX(0.825)">News</div>
<div class="tab" style="left:41px;width:64px"></div>
<div class="t h" style="left:46.8px;top:574px;transform:scaleX(0.825)">Time Graph</div>
<div class="tab" style="left:208px;width:85px"></div>
<div class="t h" style="left:211.6px;top:574px;transform:scaleX(0.83)">5 GHz Channels</div>
<div class="tab" style="left:295px;width:40px"></div>
<div class="t h" style="left:301.3px;top:574px;transform:scaleX(0.76)">Filters</div>
<div class="tab" style="left:337px;width:38px"></div>
<div class="t h" style="left:342.1px;top:574px;transform:scaleX(0.84)">GPS</div>
<div class="a" style="left:106px;top:572px;width:100px;height:21px;background:#fff;border:1px solid #898c95;border-bottom:none"></div>
<div class="t h" style="left:113.6px;top:572px;transform:scaleX(.835)">2.4 GHz Channels</div>
<div class="a" style="left:0;top:592px;width:1849px;height:2px;background:#fff"></div>
<div class="a" style="left:107px;top:590px;width:100px;height:3px;background:#fff"></div>
<div class="a" style="left:0;top:592px;width:1px;height:421px;background:#fff"></div>
<svg class="a" style="left:0;top:594px" width="1849" height="417" viewBox="0 594 1849 417" font-family="Liberation Sans, sans-serif">
<g stroke="#5e5e5e" stroke-width="1" stroke-dasharray="1 1" shape-rendering="crispEdges">
<path d="M60 969.5H1849"/>
<path d="M60 948.5H1849"/>
<path d="M60 927.5H1849"/>
<path d="M60 906.5H1849"/>
<path d="M60 885.5H1849"/>
<path d="M60 863.5H1849"/>
<path d="M60 842.5H1849"/>
<path d="M60 821.5H1849"/>
<path d="M60 800.5H1849"/>
<path d="M60 778.5H1849"/>
<path d="M60 757.5H1849"/>
<path d="M60 736.5H1849"/>
<path d="M60 715.5H1849"/>
<path d="M60 693.5H1849"/>
<path d="M60 672.5H1849"/>
<path d="M60 651.5H1849"/>
<path d="M60 630.5H1849"/>
</g>
<g shape-rendering="crispEdges"><path d="M55.5 603V991M55 603.5H1849" stroke="#7c7c7c" fill="none"/><path d="M55 991.5H1849" stroke="#a8a8a8"/>
<path d="M53 991.5H58" stroke="#eee"/>
<path d="M53 969.5H58" stroke="#eee"/>
<path d="M53 948.5H58" stroke="#eee"/>
<path d="M53 927.5H58" stroke="#eee"/>
<path d="M53 906.5H58" stroke="#eee"/>
<path d="M53 885.5H58" stroke="#eee"/>
<path d="M53 863.5H58" stroke="#eee"/>
<path d="M53 842.5H58" stroke="#eee"/>
<path d="M53 821.5H58" stroke="#eee"/>
<path d="M53 800.5H58" stroke="#eee"/>
<path d="M53 778.5H58" stroke="#eee"/>
<path d="M53 757.5H58" stroke="#eee"/>
<path d="M53 736.5H58" stroke="#eee"/>
<path d="M53 715.5H58" stroke="#eee"/>
<path d="M53 693.5H58" stroke="#eee"/>
<path d="M53 672.5H58" stroke="#eee"/>
<path d="M53 651.5H58" stroke="#eee"/>
<path d="M53 630.5H58" stroke="#eee"/>
</g>
<text x="49.3" y="994.8" text-anchor="end" font-size="12.3" textLength="21.5" lengthAdjust="spacingAndGlyphs" fill="#ff0000">-100</text>
<text x="49.3" y="972.8" text-anchor="end" font-size="12.3" textLength="16" lengthAdjust="spacingAndGlyphs" fill="#ff1000">-95</text>
<text x="49.3" y="951.8" text-anchor="end" font-size="12.3" textLength="16" lengthAdjust="spacingAndGlyphs" fill="#ff2000">-90</text>
<text x="49.3" y="930.8" text-anchor="end" font-size="12.3" textLength="16" lengthAdjust="spacingAndGlyphs" fill="#ff3800">-85</text>
<text x="49.3" y="909.8" text-anchor="end" font-size="12.3" textLength="16" lengthAdjust="spacingAndGlyphs" fill="#ff4800">-80</text>
<text x="49.3" y="888.8" text-anchor="end" font-size="12.3" textLength="16" lengthAdjust="spacingAndGlyphs" fill="#ff6e10">-75</text>
<text x="49.3" y="866.8" text-anchor="end" font-size="12.3" textLength="16" lengthAdjust="spacingAndGlyphs" fill="#ff8c00">-70</text>
<text x="49.3" y="845.8" text-anchor="end" font-size="12.3" textLength="16" lengthAdjust="spacingAndGlyphs" fill="#f0aa1e">-65</text>
<text x="49.3" y="824.8" text-anchor="end" font-size="12.3" textLength="16" lengthAdjust="spacingAndGlyphs" fill="#fadc14">-60</text>
<text x="49.3" y="803.8" text-anchor="end" font-size="12.3" textLength="16" lengthAdjust="spacingAndGlyphs" fill="#9acd32">-55</text>
<text x="49.3" y="781.8" text-anchor="end" font-size="12.3" textLength="16" lengthAdjust="spacingAndGlyphs" fill="#28c828">-50</text>
<text x="49.3" y="760.8" text-anchor="end" font-size="12.3" textLength="16" lengthAdjust="spacingAndGlyphs" fill="#28c828">-45</text>
<text x="49.3" y="739.8" text-anchor="end" font-size="12.3" textLength="16" lengthAdjust="spacingAndGlyphs" fill="#28c828">-40</text>
<text x="49.3" y="718.8" text-anchor="end" font-size="12.3" textLength="16" lengthAdjust="spacingAndGlyphs" fill="#28c828">-35</text>
<text x="49.3" y="696.8" text-anchor="end" font-size="12.3" textLength="16" lengthAdjust="spacingAndGlyphs" fill="#28c828">-30</text>
<text x="49.3" y="675.8" text-anchor="end" font-size="12.3" textLength="16" lengthAdjust="spacingAndGlyphs" fill="#28c828">-25</text>
<text x="49.3" y="654.8" text-anchor="end" font-size="12.3" textLength="16" lengthAdjust="spacingAndGlyphs" fill="#28c828">-20</text>
<text x="49.3" y="633.8" text-anchor="end" font-size="12.3" textLength="16" lengthAdjust="spacingAndGlyphs" fill="#28c828">-15</text>
<text transform="translate(19.5 834.5) rotate(-90)" font-size="10.8" textLength="69" lengthAdjust="spacingAndGlyphs" fill="#2bd92b">Amplitude [dB]</text>
<text x="295.5" y="1007" text-anchor="middle" font-size="12.3" textLength="4" lengthAdjust="spacingAndGlyphs" fill="#0f0">1</text>
<text x="391.2" y="1007" text-anchor="middle" font-size="12.3" textLength="5.2" lengthAdjust="spacingAndGlyphs" fill="#0f0">2</text>
<text x="487.0" y="1007" text-anchor="middle" font-size="12.3" textLength="5.2" lengthAdjust="spacingAndGlyphs" fill="#0f0">3</text>
<text x="582.8" y="1007" text-anchor="middle" font-size="12.3" textLength="5.2" lengthAdjust="spacingAndGlyphs" fill="#0f0">4</text>
<text x="678.5" y="1007" text-anchor="middle" font-size="12.3" textLength="5.2" lengthAdjust="spacingAndGlyphs" fill="#0f0">5</text>
<text x="774.2" y="1007" text-anchor="middle" font-size="12.3" textLength="5.2" lengthAdjust="spacingAndGlyphs" fill="#0f0">6</text>
<text x="870.0" y="1007" text-anchor="middle" font-size="12.3" textLength="5.2" lengthAdjust="spacingAndGlyphs" fill="#0f0">7</text>
<text x="965.8" y="1007" text-anchor="middle" font-size="12.3" textLength="5.2" lengthAdjust="spacingAndGlyphs" fill="#0f0">8</text>
<text x="1061.5" y="1007" text-anchor="middle" font-size="12.3" textLength="5.2" lengthAdjust="spacingAndGlyphs" fill="#0f0">9</text>
<text x="1157.2" y="1007" text-anchor="middle" font-size="12.3" textLength="12.2" lengthAdjust="spacingAndGlyphs" fill="#0f0">10</text>
<text x="1253.0" y="1007" text-anchor="middle" font-size="12.3" textLength="12.2" lengthAdjust="spacingAndGlyphs" fill="#0f0">11</text>
<text x="1348.8" y="1007" text-anchor="middle" font-size="12.3" textLength="12.2" lengthAdjust="spacingAndGlyphs" fill="#0f0">12</text>
<text x="1444.5" y="1007" text-anchor="middle" font-size="12.3" textLength="12.2" lengthAdjust="spacingAndGlyphs" fill="#0f0">13</text>
<text x="1672.0" y="1007" text-anchor="middle" font-size="12.3" textLength="12.2" lengthAdjust="spacingAndGlyphs" fill="#0f0">14</text>
<path d="M477.5 991.0 L488.0 963.3 L495.2 941.9 L499.7 922.6 L503.7 898.0 L506.0 886.5 L506.0 782.0 L831.0 782.0 L831.0 886.5 L833.3 898.0 L837.3 922.6 L841.8 941.9 L849.0 963.3 L859.5 991.0" fill="none" stroke="#ff0000" stroke-width="2" stroke-linejoin="miter" shape-rendering="crispEdges"/>
<text x="636" y="778" font-size="12.3" text-anchor="start" textLength="64.8" lengthAdjust="spacingAndGlyphs" fill="#ff0000">AsusLyraNet</text>
<path d="M477.5 991.0 L488.0 979.1 L495.2 969.9 L499.7 961.5 L503.7 951.0 L506.0 946.0 L506.0 901.0 L831.0 901.0 L831.0 946.0 L833.3 951.0 L837.3 961.5 L841.8 969.9 L849.0 979.1 L859.5 991.0" fill="none" stroke="#32cd32" stroke-width="2" stroke-linejoin="miter" shape-rendering="crispEdges"/>
<text x="636.5" y="896.5" font-size="12.3" text-anchor="start" textLength="67" lengthAdjust="spacingAndGlyphs" fill="#32cd32">AsusLyraNet</text>
<rect x="656" y="878" width="51" height="13" fill="#000"/>
<path d="M284.5 991.0 L295.4 978.5 L302.8 968.9 L307.5 960.2 L311.6 949.2 L314.0 944.0 L314.0 897.0 L1022.0 897.0 L1022.0 944.0 L1024.4 949.2 L1028.5 960.2 L1033.2 968.9 L1040.6 978.5 L1051.5 991.0" fill="none" stroke="#4169e1" stroke-width="2" stroke-linejoin="miter" shape-rendering="crispEdges"/>
<text x="631" y="893" font-size="12.3" text-anchor="start" textLength="24" lengthAdjust="spacingAndGlyphs" fill="#4169e1">TP-LI</text>
<path d="M668.5 991.0 L679.0 979.1 L686.2 969.9 L690.7 961.5 L694.7 951.0 L697.0 946.0 L697.0 901.0 L1022.0 901.0 L1022.0 946.0 L1024.3 951.0 L1028.3 961.5 L1032.8 969.9 L1040.0 979.1 L1050.5 991.0" fill="none" stroke="#ffa500" stroke-width="2" stroke-linejoin="miter" shape-rendering="crispEdges"/>
<text x="841" y="897" font-size="12.3" text-anchor="start" textLength="36.3" lengthAdjust="spacingAndGlyphs" fill="#ffa500">Internet</text>
<path d="M764.5 991.0 L775.0 979.1 L782.2 969.9 L786.7 961.5 L790.7 951.0 L793.0 946.0 L793.0 901.0 L1118.0 901.0 L1118.0 946.0 L1120.3 951.0 L1124.3 961.5 L1128.8 969.9 L1136.0 979.1 L1146.5 991.0" fill="none" stroke="#e6c69c" stroke-width="2" stroke-linejoin="miter" shape-rendering="crispEdges"/>
<text x="931" y="897" font-size="12.3" text-anchor="start" textLength="24" lengthAdjust="spacingAndGlyphs" fill="#e6c69c">ekon</text>
<text x="977" y="897" font-size="12.3" text-anchor="start" fill="#e6c69c">:</text>
<path d="M1052.5 991.0 L1063.0 981.3 L1070.2 973.8 L1074.7 967.1 L1078.7 958.5 L1081.0 954.5 L1081.0 918.0 L1406.0 918.0 L1406.0 954.5 L1408.3 958.5 L1412.3 967.1 L1416.8 973.8 L1424.0 981.3 L1434.5 991.0" fill="none" stroke="#808080" stroke-width="2" stroke-linejoin="miter" shape-rendering="crispEdges"/>
<text x="1212" y="914" font-size="12.3" text-anchor="start" textLength="34.8" lengthAdjust="spacingAndGlyphs" fill="#808080">UPC94</text>
<text x="1266.5" y="914" font-size="12.3" text-anchor="start" textLength="4" lengthAdjust="spacingAndGlyphs" fill="#808080">3</text>
<path d="M1052.5 991.0 L1063.0 969.5 L1070.2 952.9 L1074.7 937.9 L1078.7 918.9 L1081.0 910.0 L1081.0 829.0 L1406.0 829.0 L1406.0 910.0 L1408.3 918.9 L1412.3 937.9 L1416.8 952.9 L1424.0 969.5 L1434.5 991.0" fill="none" stroke="#ffc0cb" stroke-width="2" stroke-linejoin="miter" shape-rendering="crispEdges" stroke-dasharray="4 2.2"/>
<text x="1227.5" y="825" font-size="12.3" text-anchor="start" textLength="9.6" lengthAdjust="spacingAndGlyphs" fill="#ffe6ea">Le</text>
<path d="M1242.5 991.0 L1253.0 982.5 L1260.2 976.0 L1264.7 970.0 L1268.7 962.5 L1271.0 959.0 L1271.0 927.0 L1596.0 927.0 L1596.0 959.0 L1598.3 962.5 L1602.3 970.0 L1606.8 976.0 L1614.0 982.5 L1624.5 991.0" fill="none" stroke="#8b0000" stroke-width="2" stroke-linejoin="miter" shape-rendering="crispEdges"/>
<text x="1416" y="920.5" font-size="12.3" text-anchor="start" textLength="9" lengthAdjust="spacingAndGlyphs" fill="#8b0000">Xt</text>
<path d="M1425 917.5H1450" stroke="#8b0000" stroke-width="1" stroke-dasharray="2 1"/><rect x="1418" y="922" width="42" height="8" fill="#000"/>
<path d="M1242.5 991.0 L1253.0 983.6 L1260.2 977.8 L1264.7 972.7 L1268.7 966.1 L1271.0 963.0 L1271.0 935.0 L1596.0 935.0 L1596.0 963.0 L1598.3 966.1 L1602.3 972.7 L1606.8 977.8 L1614.0 983.6 L1624.5 991.0" fill="none" stroke="#fa8072" stroke-width="2" stroke-linejoin="miter" shape-rendering="crispEdges"/>
<text x="1416" y="931" font-size="12.3" text-anchor="start" textLength="12" lengthAdjust="spacingAndGlyphs" fill="#ffd0c8">X_</text>
<path d="M94.5 991.0 L105.0 976.3 L112.2 964.9 L116.7 954.6 L120.7 941.6 L123.0 935.5 L123.0 880.0 L448.0 880.0 L448.0 935.5 L450.3 941.6 L454.3 954.6 L458.8 964.9 L466.0 976.3 L476.5 991.0" fill="none" stroke="#40e0d0" stroke-width="2" stroke-linejoin="miter" shape-rendering="crispEdges" opacity="0.92"/>
<text x="254.4" y="876" font-size="12.3" text-anchor="start" textLength="18.6" lengthAdjust="spacingAndGlyphs" fill="#40e0d0" opacity="0.92">HA\</text>
<path d="M94.5 991.0 L105.0 982.5 L112.2 976.0 L116.7 970.0 L120.7 962.5 L123.0 959.0 L123.0 927.0 L448.0 927.0 L448.0 959.0 L450.3 962.5 L454.3 970.0 L458.8 976.0 L466.0 982.5 L476.5 991.0" fill="none" stroke="#f5fffa" stroke-width="2" stroke-linejoin="miter" shape-rendering="crispEdges"/>
<text x="252.6" y="922" font-size="12.3" text-anchor="start" textLength="14" lengthAdjust="spacingAndGlyphs" fill="#f5fffa">UP</text>
<text x="304.5" y="922" font-size="12.3" text-anchor="start" textLength="12.3" lengthAdjust="spacingAndGlyphs" fill="#f5fffa">34</text>
<path d="M477.5 991.0 L488.0 984.1 L495.2 978.8 L499.7 974.0 L503.7 967.9 L506.0 965.0 L506.0 939.0 L831.0 939.0 L831.0 965.0 L833.3 967.9 L837.3 974.0 L841.8 978.8 L849.0 984.1 L859.5 991.0" fill="none" stroke="#ff6347" stroke-width="2" stroke-linejoin="miter" shape-rendering="crispEdges"/>
<text x="636" y="935" font-size="12.3" text-anchor="start" textLength="64.5" lengthAdjust="spacingAndGlyphs" fill="#ff6347">AsusLyraNet</text>
<path d="M1052.5 991.0 L1063.0 987.0 L1070.2 984.0 L1074.7 981.2 L1078.7 977.6 L1081.0 976.0 L1081.0 961.0 L1406.0 961.0 L1406.0 976.0 L1408.3 977.6 L1412.3 981.2 L1416.8 984.0 L1424.0 987.0 L1434.5 991.0" fill="none" stroke="#ffff00" stroke-width="2" stroke-linejoin="miter" shape-rendering="crispEdges"/>
<text x="1209.6" y="957" font-size="12.3" text-anchor="start" textLength="27" lengthAdjust="spacingAndGlyphs" fill="#ffff00">UPC3</text>
<text x="1269.3" y="957" font-size="12.3" text-anchor="start" textLength="5.5" lengthAdjust="spacingAndGlyphs" fill="#ffa500">3</text>
<path d="M1242.5 991.0 L1253.0 979.1 L1260.2 969.9 L1264.7 961.5 L1268.7 951.0 L1271.0 946.0 L1271.0 901.0 L1596.0 901.0 L1596.0 946.0 L1598.3 951.0 L1602.3 961.5 L1606.8 969.9 L1614.0 979.1 L1624.5 991.0" fill="none" stroke="#6b8e23" stroke-width="2" stroke-linejoin="miter" shape-rendering="crispEdges"/>
<text x="1408.6" y="897" font-size="12.3" text-anchor="start" textLength="7.4" lengthAdjust="spacingAndGlyphs" fill="#6b8e23">D</text>
<path d="M94.5 991.0 L105.0 973.5 L112.2 960.0 L116.7 947.8 L120.7 932.3 L123.0 925.0 L123.0 859.0 L448.0 859.0 L448.0 925.0 L450.3 932.3 L454.3 947.8 L458.8 960.0 L466.0 973.5 L476.5 991.0" fill="none" stroke="#bdb76b" stroke-width="2" stroke-linejoin="miter" shape-rendering="crispEdges"/>
<text x="267" y="855" font-size="12.3" text-anchor="start" textLength="13.6" lengthAdjust="spacingAndGlyphs" fill="#bdb76b">Zd</text>
<path d="M94.5 991.0 L105.0 985.8 L112.2 981.8 L116.7 978.2 L120.7 973.6 L123.0 971.5 L123.0 952.0 L448.0 952.0 L448.0 971.5 L450.3 973.6 L454.3 978.2 L458.8 981.8 L466.0 985.8 L476.5 991.0" fill="none" stroke="#ff0000" stroke-width="2" stroke-linejoin="miter" shape-rendering="crispEdges"/>
<text x="252.6" y="948" font-size="12.3" text-anchor="start" textLength="65.6" lengthAdjust="spacingAndGlyphs" fill="#ff0000">UPC Wi-Free</text>
<path d="M94.5 991.0 L105.0 983.0 L112.2 976.9 L116.7 971.4 L120.7 964.3 L123.0 961.0 L123.0 931.0 L448.0 931.0 L448.0 961.0 L450.3 964.3 L454.3 971.4 L458.8 976.9 L466.0 983.0 L476.5 991.0" fill="none" stroke="#32cd32" stroke-width="2" stroke-linejoin="miter" shape-rendering="crispEdges" opacity="0.72"/>
<text x="234.4" y="927" font-size="12.3" text-anchor="start" textLength="100" lengthAdjust="spacingAndGlyphs" fill="#32cd32" opacity="0.72">DIRECT-xx-BRAVIA</text>
<rect x="270" y="916" width="35" height="9" fill="#000"/><rect x="283" y="924" width="20" height="3" fill="#000"/>
<path d="M190.5 991.0 L201.0 987.0 L208.2 984.0 L212.7 981.2 L216.7 977.6 L219.0 976.0 L219.0 961.0 L544.0 961.0 L544.0 976.0 L546.3 977.6 L550.3 981.2 L554.8 984.0 L562.0 987.0 L572.5 991.0" fill="none" stroke="#4169e1" stroke-width="2" stroke-linejoin="miter" shape-rendering="crispEdges" opacity="0.75"/>
<text x="364" y="957.5" font-size="12.3" text-anchor="start" textLength="36" lengthAdjust="spacingAndGlyphs" fill="#4169e1" opacity="0.75">vanillat</text>
<path d="M573.5 991.0 L584.0 981.3 L591.2 973.8 L595.7 967.1 L599.7 958.5 L602.0 954.5 L602.0 918.0 L927.0 918.0 L927.0 954.5 L929.3 958.5 L933.3 967.1 L937.8 973.8 L945.0 981.3 L955.5 991.0" fill="none" stroke="#ffa500" stroke-width="2" stroke-linejoin="miter" shape-rendering="crispEdges"/>
<text x="749.2" y="914" font-size="12.3" text-anchor="start" textLength="29.2" lengthAdjust="spacingAndGlyphs" fill="#ffa500">ASUS</text>
<path d="M1052.5 991.0 L1063.0 984.8 L1070.2 980.0 L1074.7 975.6 L1078.7 970.1 L1081.0 967.5 L1081.0 944.0 L1406.0 944.0 L1406.0 967.5 L1408.3 970.1 L1412.3 975.6 L1416.8 980.0 L1424.0 984.8 L1434.5 991.0" fill="none" stroke="#d2b48c" stroke-width="2" stroke-linejoin="miter" shape-rendering="crispEdges" opacity="0.58"/>
<text x="1209.6" y="940" font-size="12.3" text-anchor="start" textLength="36.7" lengthAdjust="spacingAndGlyphs" fill="#d2b48c" opacity="0.58">UPC W</text>
<text x="1268.7" y="940" font-size="12.3" text-anchor="start" textLength="6" lengthAdjust="spacingAndGlyphs" fill="#d2b48c" opacity="0.58">e</text>
<path d="M1256.5 819v6" stroke="#e08030" stroke-width="1"/>
</svg>
<div class="a" style="left:0;top:1011px;width:1849px;height:5px;background:#fff"></div>
<div class="a" style="left:0;top:1013px;width:1849px;height:1px;background:#a5acb8"></div>
<div class="a" style="left:0;top:1015px;width:1849px;height:1px;background:#8c8c8c"></div>
<div class="a" style="left:0;top:1016px;width:1849px;height:9px;background:#f0eeee"></div>
<div class="g" style="left:1px;top:1019px;line-height:16px;color:#000;transform:scaleX(.985)">21 / 21 AP(s)</div>
<div class="g" style="left:101px;top:1019px;line-height:16px;color:#000;transform:scaleX(.93)">GPS: Off</div>
<div class="g" style="left:543.5px;top:1019px;line-height:16px;color:#000;transform:scaleX(1.01)">Logging: Off</div>
</body></html>
